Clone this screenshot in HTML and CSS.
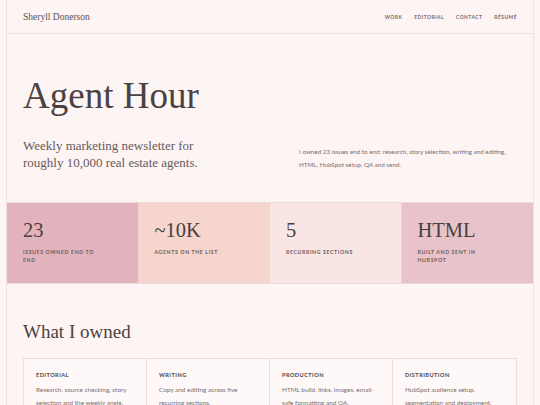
FILE: index.html
```html
<!DOCTYPE html>
<html lang="en">
<head>
    <meta charset="UTF-8">
    <meta name="viewport" content="width=device-width, initial-scale=1.0">
    <title>Agent Hour — Sheryll Donerson</title>
    <link rel="stylesheet" href="styles.css">
</head>
<body>
    <div class="page">
        <header class="top">
            <a class="logo" href="#">Sheryll Donerson</a>
            <nav class="nav">
                <a href="#">Work</a>
                <a href="#">Editorial</a>
                <a href="#">Contact</a>
                <a href="#">Résumé</a>
            </nav>
        </header>

        <section class="hero">
            <div class="hero-left">
                <h1>Agent Hour</h1>
                <p class="lede">Weekly marketing newsletter for roughly 10,000 real estate agents.</p>
            </div>
            <p class="hero-note">I owned 23 issues end to end: research, story selection, writing and editing, HTML, HubSpot setup, QA and send.</p>
        </section>

        <section class="stats">
            <div class="stat rose">
                <div class="num">23</div>
                <div class="label">Issues owned end to end</div>
            </div>
            <div class="stat peach">
                <div class="num">~10K</div>
                <div class="label">Agents on the list</div>
            </div>
            <div class="stat blush">
                <div class="num">5</div>
                <div class="label">Recurring sections</div>
            </div>
            <div class="stat mauve">
                <div class="num">HTML</div>
                <div class="label">Built and sent in HubSpot</div>
            </div>
        </section>

        <section class="owned">
            <h2>What I owned</h2>
            <div class="cards">
                <div class="card">
                    <h3>Editorial</h3>
                    <p>Research, source checking, story selection and the weekly angle.</p>
                </div>
                <div class="card">
                    <h3>Writing</h3>
                    <p>Copy and editing across five recurring sections.</p>
                </div>
                <div class="card">
                    <h3>Production</h3>
                    <p>HTML build, links, images, email-safe formatting and QA.</p>
                </div>
                <div class="card">
                    <h3>Distribution</h3>
                    <p>HubSpot audience setup, segmentation and deployment.</p>
                </div>
            </div>
        </section>
    </div>
</body>
</html>
```

FILE: styles.css
```css
* {
    margin: 0;
    padding: 0;
    box-sizing: border-box;
}
body {
    background-color: #fdf4f4;
    color: #4b4343;
    font-family: Lato, "Open Sans", sans-serif;
}
a {
    color: inherit;
    text-decoration: none;
}
.page {
    margin: 0 6px;
    min-height: 100vh;
    border-left: 1px solid #f1e0e0;
    border-right: 1px solid #f1e0e0;
}

/* header */
.top {
    height: 34px;
    padding: 0 16px;
    display: flex;
    align-items: center;
    justify-content: space-between;
    border-bottom: 1px solid #f1e0e0;
}
.logo {
    font-family: "Liberation Serif", serif;
    font-size: 9.5px;
    color: #5a5050;
}
.nav {
    display: flex;
    gap: 12px;
}
.nav a {
    font-size: 4.9px;
    font-weight: 700;
    letter-spacing: 0.1em;
    text-transform: uppercase;
    color: #776c6c;
}

/* hero */
.hero {
    display: flex;
    align-items: flex-end;
    justify-content: space-between;
    padding: 40px 16px 31px;
}
.hero h1 {
    font-family: "Liberation Serif", serif;
    font-weight: 400;
    font-size: 37px;
    line-height: 44px;
    color: #4a4242;
    margin-bottom: 20px;
}
.lede {
    font-family: "Liberation Serif", serif;
    font-size: 13px;
    line-height: 16.5px;
    color: #655b5b;
    width: 180px;
}
.hero-note {
    width: 218px;
    font-size: 6.3px;
    line-height: 13px;
    color: #7a6f6f;
    margin-bottom: 0;
}

/* stats */
.stats {
    display: grid;
    grid-template-columns: repeat(4, 1fr);
    border-top: 1px solid #efdada;
    border-bottom: 1px solid #efdada;
}
.stat {
    height: 80px;
    padding: 15px 16px 0;
    border-right: 1px solid #ecd4d4;
}
.stat:last-child {
    border-right: 0;
}
.rose { background-color: #e3b3bd; }
.peach { background-color: #f6d5cc; }
.blush { background-color: #f9e6e4; }
.mauve { background-color: #e8c3c9; }
.num {
    font-family: "Liberation Serif", serif;
    font-size: 20.5px;
    line-height: 24px;
    color: #4a4040;
    margin-bottom: 6px;
}
.label {
    max-width: 74px;
    font-size: 5.2px;
    line-height: 8px;
    font-weight: 700;
    letter-spacing: 0.12em;
    text-transform: uppercase;
    color: #6b5d5f;
}

/* what I owned */
.owned {
    padding: 36px 16px 0;
}
.owned h2 {
    font-family: "Liberation Serif", serif;
    font-weight: 400;
    font-size: 19px;
    line-height: 24px;
    color: #4a4242;
    margin-bottom: 14px;
}
.cards {
    display: grid;
    grid-template-columns: repeat(4, 1fr);
    border: 1px solid #efdcdc;
    background-color: #fef8f8;
}
.card {
    padding: 12px 12px 16px;
    border-right: 1px solid #efdcdc;
}
.card:last-child {
    border-right: 0;
}
.card h3 {
    font-size: 5.6px;
    font-weight: 700;
    letter-spacing: 0.08em;
    text-transform: uppercase;
    color: #4f4545;
    margin-bottom: 5px;
}
.card p {
    font-size: 6.4px;
    line-height: 13px;
    color: #7a6f6f;
}
```
